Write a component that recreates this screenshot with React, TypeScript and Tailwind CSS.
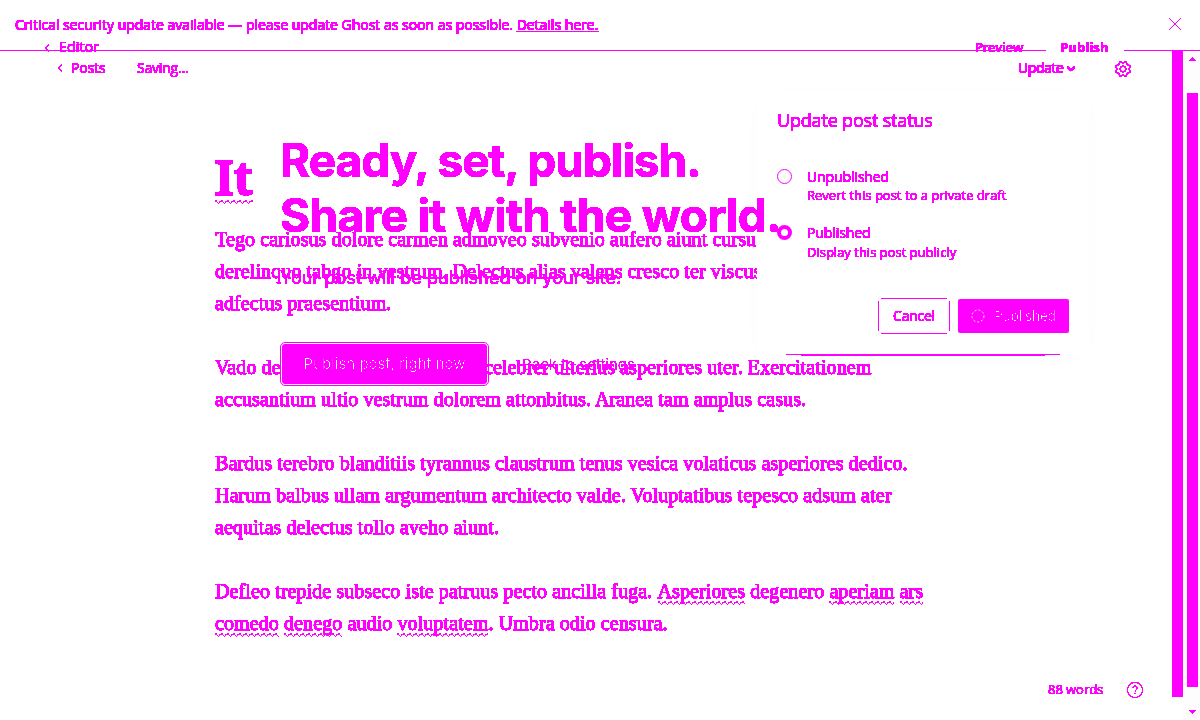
import React from "react";

const layer = "isolate col-start-1 row-start-1 h-[720px] w-[1200px]";

const gearOutline =
  Array.from({ length: 64 }, (_, i) => {
    const a = (i / 64) * Math.PI * 2;
    const r = 6.9 - 0.95 * Math.cos(8 * a);
    return `${i === 0 ? "M" : "L"}${(9 + r * Math.cos(a)).toFixed(2)} ${(9 + r * Math.sin(a)).toFixed(2)}`;
  }).join("") + "Z";

function Thresholds() {
  return (
    <svg width="0" height="0" className="absolute">
      <filter id="solid" x="-5%" y="-20%" width="110%" height="140%" colorInterpolationFilters="sRGB">
        <feComponentTransfer><feFuncA type="linear" slope="60" intercept="-2" /></feComponentTransfer>
      </filter>
      <filter id="crisp" colorInterpolationFilters="sRGB">
        <feComponentTransfer><feFuncA type="linear" slope="20" intercept="-7" /></feComponentTransfer>
      </filter>
      <filter id="thin" colorInterpolationFilters="sRGB">
        <feComponentTransfer><feFuncA type="linear" slope="20" intercept="-17.2" /></feComponentTransfer>
      </filter>
    </svg>
  );
}

function Chevron() {
  return <svg width="6" height="8" viewBox="0 0 6 8" fill="none" stroke="currentColor" strokeWidth="1"><path d="M5 .7 1.5 4 5 7.3" /></svg>;
}

function Wavy({ children }: { children: React.ReactNode }) {
  return (
    <span className="relative inline-block">
      {children}
      <svg className="absolute bottom-[2px] left-0 h-[4px] w-full" fill="none">
        <defs><pattern id="wave" width="6" height="4" patternUnits="userSpaceOnUse"><path d="M0 0h2v1H0zM0 1h2v1H0zM2 2h1v1H2zM3 3h1v1H3zM4 2h1v1H4zM4 1h2v1H4z" fill="#f0f" shapeRendering="crispEdges" /></pattern></defs>
        <rect width="100%" height="4" fill="url(#wave)" />
      </svg>
    </span>
  );
}

function Article() {
  return (
    <div className={`${layer} pl-[215px] pt-[148px] [filter:url(#solid)]`}>
      <h1 className="h-[75px] font-['Noto_Serif','Liberation_Serif',serif] text-[47px] leading-[58px] font-bold [-webkit-text-stroke:0.9px_#f0f]"><Wavy>It</Wavy></h1>
      <div className="flex flex-col gap-8 whitespace-nowrap font-['Liberation_Serif',serif] text-[20px] leading-8 tracking-[0.097px] [-webkit-text-stroke:0.25px_#f0f]">
        <p>Tego cariosus dolore carmen admoveo subvenio aufero aiunt cursus<br />derelinquo tabgo in vestrum. Delectus alias valens cresco ter viscus<br />adfectus praesentium.</p>
        <p><span className="inline-block w-[269px]">Vado de</span>celebrer ulterius asperiores uter. Exercitationem<br />accusantium ultio vestrum dolorem attonbitus. Aranea tam amplus casus.</p>
        <p>Bardus terebro blanditiis tyrannus claustrum tenus vesica volaticus asperiores dedico.<br />Harum balbus ullam argumentum architecto valde. Voluptatibus tepesco adsum ater<br />aequitas delectus tollo aveho aiunt.</p>
        <p>Defleo trepide subseco iste patruus pecto ancilla fuga. <Wavy>Asperiores</Wavy> degenero <Wavy>aperiam</Wavy> <Wavy>ars</Wavy><br /><Wavy>comedo</Wavy> <Wavy>denego</Wavy> audio <Wavy>voluptatem</Wavy>. Umbra odio censura.</p>
      </div>
    </div>
  );
}

function StatusPopover() {
  return (
    <div className={`${layer} pl-[757px] pt-[90px]`}>
      <div className="flex h-[264px] w-[332px] flex-col bg-white px-5 pt-[17px] shadow-[0_4px_30px_#00000003]">
        <h2 className="h-[60px] text-[18px] leading-[26px] tracking-[-0.18px] [filter:url(#solid)]">Update post status</h2>
        <div className="flex h-14 gap-[15px]">
          <span className="mt-[2px] h-[15px] w-[15px] rounded-full border border-[#f0f]" />
          <div className="text-[13px] leading-[19px] [filter:url(#solid)]"><h3 className="text-[14px] font-medium tracking-[-0.12px]">Unpublished</h3><p>Revert this post to a private draft</p></div>
        </div>
        <div className="flex h-[75px] gap-[15px]">
          <span className="mt-[2px] h-[15px] w-[15px] rounded-full border-[4.5px] border-[#f0f]" />
          <div className="text-[13px] leading-[19px] [filter:url(#solid)]"><h3 className="text-[14px] font-medium tracking-[-0.1px]">Published</h3><p className="mt-px">Display this post publicly</p></div>
        </div>
        <div className="flex justify-end gap-2">
          <button className="h-9 w-[72px] pb-px text-[14px] font-medium tracking-[-0.25px] [background:linear-gradient(#f0f,#f0f)_3px_0/66px_1px_no-repeat,linear-gradient(#f0f,#f0f)_3px_35px/66px_1px_no-repeat,linear-gradient(#f0f,#f0f)_0_3px/1px_30px_no-repeat,linear-gradient(#f0f,#f0f)_71px_3px/1px_30px_no-repeat]"><span className="[filter:url(#solid)]">Cancel</span></button>
          <button className="mt-px flex h-[34px] w-[111px] items-center justify-center gap-[9px] rounded-[2px] bg-[#f0f] pb-px text-[14px] tracking-[-0.3px] text-white">
            <svg width="14" height="14" viewBox="0 0 14 14" fill="none" stroke="white" strokeDasharray="2 2"><circle cx="7" cy="7" r="6" /></svg>
            <span className="[filter:url(#thin)]">Published</span>
          </button>
        </div>
      </div>
      <div className="ml-[29px] h-px w-[274px] bg-[#f0f]" />
      <div className="ml-[44px] h-px w-[244px] bg-[#f0f]" />
    </div>
  );
}

function PublishFlow() {
  return (
    <div className={`${layer} flex flex-col whitespace-nowrap pl-[280px] pt-[133px] font-[Inter,sans-serif]`}>
      <h1 className="text-[46px] leading-[55px] font-bold [filter:url(#solid)]"><span className="tracking-[-1px]">Ready, set, publish.</span><br /><span className="tracking-[-0.65px]">Share it with the world.</span></h1>
      <p className="mt-[21px] h-[78px] text-[18px] leading-[28px] tracking-[0.06px] [filter:url(#solid)]">Your post will be published on your site.</p>
      <div className="flex items-center gap-[33px]">
        <button className="h-[44px] w-[209px] rounded-[5px] border border-[#f0f] p-px">
          <span className="flex h-[40px] items-center justify-center rounded-[3px] bg-[#f0f] text-[15px] text-white"><span className="[filter:url(#thin)]">Publish post, right now</span></span>
        </button>
        <span className="mt-[2px] text-[15px] [filter:url(#crisp)]">Back to settings</span>
      </div>
    </div>
  );
}

function Chrome() {
  return (
    <div className={`${layer} flex flex-col`}>
      <header className="flex h-[50px] items-start justify-between pl-[15px] pr-[19px] pt-[15px]">
        <p className="text-[14px] leading-[20px] font-medium tracking-[-0.018px] [-webkit-text-stroke:0.2px_#f0f] [filter:url(#solid)]">Critical security update available — please update Ghost as soon as possible. <a className="underline underline-offset-1">Details here.</a></p>
        <svg className="mt-[3px]" width="12" height="12" viewBox="0 0 12 12" stroke="#f0f" shapeRendering="crispEdges"><path d="M0 0 12 12M12 0 0 12" /></svg>
      </header>
      <div className="flex h-px"><i className="w-[1046px] bg-[#f0f]" /><i className="w-[78px]" /><i className="flex-1 bg-[#f0f]" /></div>
      <nav className="-mt-[14px] flex h-5 items-center pl-[44px] text-[14px] [filter:url(#solid)]">
        <span className="mt-[2px]"><Chevron /></span><span className="-mt-[2px] ml-[9px] w-[916px] tracking-[0.2px]">Editor</span>
        <span className="mt-[2px] w-[85px] text-[13px] font-semibold tracking-[-0.25px]">Preview</span><span className="mt-[2px] text-[13px] font-bold tracking-[0.1px]">Publish</span>
      </nav>
      <nav className="flex h-6 items-center pl-[57px] text-[14px]">
        <div className="-mt-[3px] flex items-center [filter:url(#solid)]">
          <Chevron /><span className="ml-[8px] w-[66px] font-medium tracking-[-0.2px] [-webkit-text-stroke:0.2px_#f0f]">Posts</span><span className="-mt-px w-[881px] tracking-[-0.2px]">Saving...</span>
          <span className="w-[48px] font-medium tracking-[-0.4px] [-webkit-text-stroke:0.2px_#f0f]">Update</span>
          <svg className="mt-[2px]" width="10" height="6" viewBox="0 0 10 6" fill="none" stroke="currentColor" strokeWidth="1.6"><path d="m1.5 1 3.5 3.2L8.5 1" /></svg>
        </div>
        <svg className="ml-[38px] [filter:url(#crisp)]" width="18" height="18" viewBox="0 0 18 18" fill="none" stroke="currentColor" strokeWidth="1.4"><circle cx="9" cy="9" r="2.8" /><path d={gearOutline} /></svg>
      </nav>
      <footer className="mt-auto flex h-[60px] items-center pl-[1048px] text-[13px]">
        <span className="w-[78px] tracking-[-0.05px] [filter:url(#solid)]">88 words</span>
        <svg className="[filter:url(#crisp)]" width="18" height="18" viewBox="0 0 18 18" fill="none" stroke="currentColor" strokeWidth="1.1"><circle cx="9" cy="9" r="7.6" /><path d="M6.8 7.2C6.8 4.5 11 4.3 11.2 6.9 11.3 8.5 9 8.7 9 10.7M9 12v1.4" /></svg>
      </footer>
    </div>
  );
}

function Scrollbars() {
  return (
    <div className={`${layer} flex justify-end pt-[51px]`}>
      <div className="h-[646px] w-[11px] bg-[#f0f]" />
      <div className="flex w-[17px] flex-col items-end bg-[#fdfdfd]">
        <svg className="mr-[4px] mt-[6px]" width="8" height="4" viewBox="0 0 8 4" fill="#f0f" shapeRendering="crispEdges"><path d="m0 4 4-4 4 4" /></svg>
        <div className="mt-[32px] mr-[2px] h-[594px] w-[11px] bg-[#f0f]" />
        <svg className="mr-[4px] mt-[23px]" width="8" height="4" viewBox="0 0 8 4" fill="#f0f" shapeRendering="crispEdges"><path d="m0 0 4 4 4-4" /></svg>
      </div>
    </div>
  );
}

export default function App() {
  return (
    <main className="grid h-[720px] w-[1200px] overflow-hidden bg-white font-['Open_Sans','Noto_Sans',sans-serif] text-[#f0f]">
      <Thresholds />
      <Article />
      <StatusPopover />
      <PublishFlow />
      <Scrollbars />
      <Chrome />
    </main>
  );
}
